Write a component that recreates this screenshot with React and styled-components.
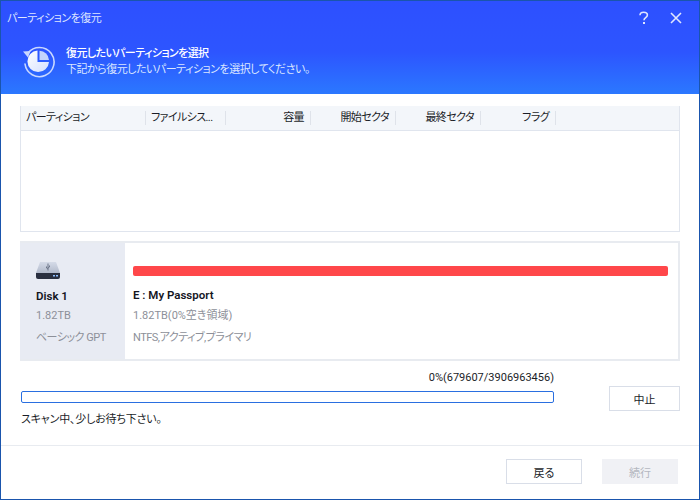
import { createGlobalStyle, styled } from 'styled-components';

const GlobalStyle = createGlobalStyle`
  html, body {
    margin: 0;
    padding: 0;
    background: #fff;
  }
  * {
    box-sizing: border-box;
  }
`;

const Window = styled.div`
  width: 700px;
  height: 500px;
  display: flex;
  flex-direction: column;
  overflow: hidden;
  background: #fff;
  border: 1px solid #1a55ad;
  border-top: 0;
  font-family: Roboto, 'Noto Sans CJK JP', sans-serif;
  font-size: 11px;
  letter-spacing: -0.5px;
  font-feature-settings: 'palt';
  color: #1a1d28;
`;

const Header = styled.header`
  height: 94px;
  flex: none;
  margin: 0 -1px;
  padding: 0 21px;
  color: #fff;
  background: linear-gradient(180deg, #2d50ff 0%, #2d55ff 55%, #2b78ff 100%);
  border-top: 1px solid #1a55ad;
`;

const TitleBar = styled.div`
  height: 31px;
  display: flex;
  align-items: center;
  justify-content: space-between;
`;

const WindowTitle = styled.div`
  margin-left: -14px;
  color: #dfe6ff;
`;

const WindowButtons = styled.div`
  display: flex;
  align-items: center;
  gap: 20px;
  margin-right: -3px;
  margin-top: 2px;
`;

const Banner = styled.div`
  display: flex;
  align-items: center;
  gap: 10px;
  margin-top: 12px;
  margin-left: 1px;
`;

const BannerText = styled.div`
  display: flex;
  flex-direction: column;
  gap: 1px;
  line-height: 15px;
`;

const BannerTitle = styled.div`
  font-weight: 500;
  letter-spacing: -0.6px;
`;

const BannerSub = styled.div`
  color: #dbe6ff;
`;

const Body = styled.main`
  flex: 1;
  display: flex;
  flex-direction: column;
  padding: 12px 19px 0;
`;

const Table = styled.section`
  height: 126px;
  flex: none;
  border: 1px solid #e0e5ee;
  border-top: 0;
`;

const TableHead = styled.div`
  height: 25px;
  display: grid;
  grid-template-columns: 125px 80px 85px 85px 85px 75px 1fr;
  align-items: center;
  background: #f3f6fa;
  border-bottom: 1px solid #e0e5ee;
`;

const HeadCell = styled.div`
  height: 14px;
  line-height: 14px;
  padding: 0 6px 0 5px;
  letter-spacing: -0.6px;
  text-align: ${(props) => props.$align || 'left'};
  border-right: ${(props) => (props.$last ? '0' : '1px solid #dfe3ea')};
  white-space: nowrap;
`;

const DiskPanel = styled.section`
  height: 120px;
  flex: none;
  margin-top: 9px;
  display: flex;
  border: 2px solid #e8ebf0;
  border-left: 0;
`;

const DiskSide = styled.div`
  width: 105px;
  flex: none;
  padding: 19px 0 0 16px;
  background: #e8ebf3;
`;

const DiskName = styled.div`
  margin-top: 9px;
  font-size: 11.5px;
  letter-spacing: 0;
  font-weight: 600;
  color: #14161f;
  line-height: 16px;
`;

const MutedText = styled.div`
  margin-top: ${(props) => props.$top || 0}px;
  color: #8d9099;
  line-height: 16px;
  white-space: nowrap;
  letter-spacing: ${(props) => props.$spacing ?? -0.5}px;
`;

const DiskMain = styled.div`
  flex: 1;
  padding: 23px 10px 0 8px;
`;

const PartitionBar = styled.div`
  height: 10px;
  border-radius: 2px;
  background: #ff474a;
`;

const PartitionName = styled.div`
  margin-top: 11px;
  font-size: 11.5px;
  letter-spacing: 0;
  font-weight: 600;
  color: #14161f;
  line-height: 16px;
`;

const ScanRow = styled.section`
  display: flex;
  justify-content: space-between;
  margin-top: 9px;
`;

const ScanMain = styled.div`
  width: 533px;
  margin-left: 1px;
`;

const Count = styled.div`
  text-align: right;
  line-height: 16px;
  letter-spacing: 0;
`;

const Progress = styled.div`
  height: 12px;
  margin-top: 5px;
  border: 1px solid #2a6fe0;
  border-radius: 2px;
`;

const ScanStatus = styled.div`
  margin-top: 9px;
  line-height: 16px;
  letter-spacing: -0.2px;
`;

const Button = styled.button`
  width: ${(props) => props.$width || 76}px;
  height: 25px;
  padding: 0;
  border: ${(props) => (props.disabled ? '0' : '1px solid #d9dee8')};
  background: ${(props) => (props.disabled ? '#f0f1f5' : '#fff')};
  color: ${(props) => (props.disabled ? '#b4b7c0' : '#1a1d28')};
  font: inherit;
  font-feature-settings: inherit;
  letter-spacing: 0;
`;

const StopButton = styled(Button)`
  width: 71px;
  margin-top: 16px;
`;

const Footer = styled.footer`
  height: 54px;
  flex: none;
  display: flex;
  justify-content: flex-end;
  gap: 20px;
  padding: 13px 21px 0 0;
  border-top: 1px solid #e8ebf0;
`;

function RestoreIcon() {
  return (
    <svg width="34" height="34" viewBox="0 0 34 34" fill="none">
      <defs>
        <linearGradient id="pie" x1="0" y1="0" x2="1" y2="1">
          <stop offset="0" stopColor="#ffffff" />
          <stop offset="1" stopColor="#d3dfff" />
        </linearGradient>
      </defs>
      <path
        d="M6 9A14.6 14.6 0 1 1 3 20"
        stroke="#c9d8ff"
        strokeWidth="1.6"
        strokeLinecap="round"
      />
      <path d="M1 7.5l7.5-.5-2.5 6.5z" fill="#c9d8ff" />
      <path d="M15.5 6.5A10.8 10.8 0 1 0 27 18H15.5z" fill="url(#pie)" />
      <path d="M17.5 6.8A9.6 9.6 0 0 1 27 16H17.5z" fill="#c4d4fc" />
    </svg>
  );
}

function DriveIcon() {
  return (
    <svg width="24" height="17" viewBox="0 0 24 17" style={{ display: 'block' }}>
      <defs>
        <linearGradient id="drive" x1="0" y1="0" x2="0" y2="1">
          <stop offset="0" stopColor="#d5dbe8" />
          <stop offset="1" stopColor="#b2bacb" />
        </linearGradient>
      </defs>
      <path d="M4 0h16l4 11H0z" fill="url(#drive)" />
      <path d="M0 11h24v4a2 2 0 0 1-2 2H2a2 2 0 0 1-2-2z" fill="#2a3040" />
      <path
        d="M12 1.5v7M10.5 4.5v1.5l1.5 1M13.5 3.5v1.5l-1.5 1"
        stroke="#6d7689"
        strokeWidth="1"
        fill="none"
      />
      <rect x="17" y="13" width="2" height="1.5" fill="#8fc0ff" />
      <rect x="20" y="13" width="2" height="1.5" fill="#8fc0ff" />
    </svg>
  );
}

function HelpIcon() {
  return (
    <svg width="12" height="14" viewBox="0 0 12 14" fill="none">
      <path
        d="M2 4.2C2 2.4 3.6 1.2 5.6 1.2S9.4 2.4 9.4 4.1c0 2.6-3.4 2.6-3.4 5.2"
        stroke="#dfe6ff"
        strokeWidth="1.6"
      />
      <rect x="5" y="11" width="2" height="2" fill="#dfe6ff" />
    </svg>
  );
}

function CloseIcon() {
  return (
    <svg width="12" height="12" viewBox="0 0 12 12" fill="none">
      <path d="M1 1l10 10M11 1L1 11" stroke="#dfe6ff" strokeWidth="1.6" />
    </svg>
  );
}

const columns = [
  { label: 'パーティション' },
  { label: 'ファイルシス...' },
  { label: '容量', align: 'right' },
  { label: '開始セクタ', align: 'right' },
  { label: '最終セクタ', align: 'right' },
  { label: 'フラグ', align: 'right' },
];

function App() {
  return (
    <Window>
      <GlobalStyle />
      <Header>
        <TitleBar>
          <WindowTitle>パーティションを復元</WindowTitle>
          <WindowButtons>
            <HelpIcon />
            <CloseIcon />
          </WindowButtons>
        </TitleBar>
        <Banner>
          <RestoreIcon />
          <BannerText>
            <BannerTitle>復元したいパーティションを選択</BannerTitle>
            <BannerSub>下記から復元したいパーティションを選択してください。</BannerSub>
          </BannerText>
        </Banner>
      </Header>

      <Body>
        <Table>
          <TableHead>
            {columns.map(({ label, align }) => (
              <HeadCell key={label} $align={align}>
                {label}
              </HeadCell>
            ))}
            <HeadCell $last />
          </TableHead>
        </Table>

        <DiskPanel>
          <DiskSide>
            <DriveIcon />
            <DiskName>Disk 1</DiskName>
            <MutedText $top={4} $spacing={0}>1.82TB</MutedText>
            <MutedText $top={6}>ベーシック GPT</MutedText>
          </DiskSide>
          <DiskMain>
            <PartitionBar />
            <PartitionName>E : My Passport</PartitionName>
            <MutedText $top={5} $spacing={0}>1.82TB(0%空き領域)</MutedText>
            <MutedText $top={6}>NTFS,アクティブ,プライマリ</MutedText>
          </DiskMain>
        </DiskPanel>

        <ScanRow>
          <ScanMain>
            <Count>0%(679607/3906963456)</Count>
            <Progress />
            <ScanStatus>スキャン中、少しお待ち下さい。</ScanStatus>
          </ScanMain>
          <StopButton>中止</StopButton>
        </ScanRow>
      </Body>

      <Footer>
        <Button>戻る</Button>
        <Button disabled>続行</Button>
      </Footer>
    </Window>
  );
}

export default App;
